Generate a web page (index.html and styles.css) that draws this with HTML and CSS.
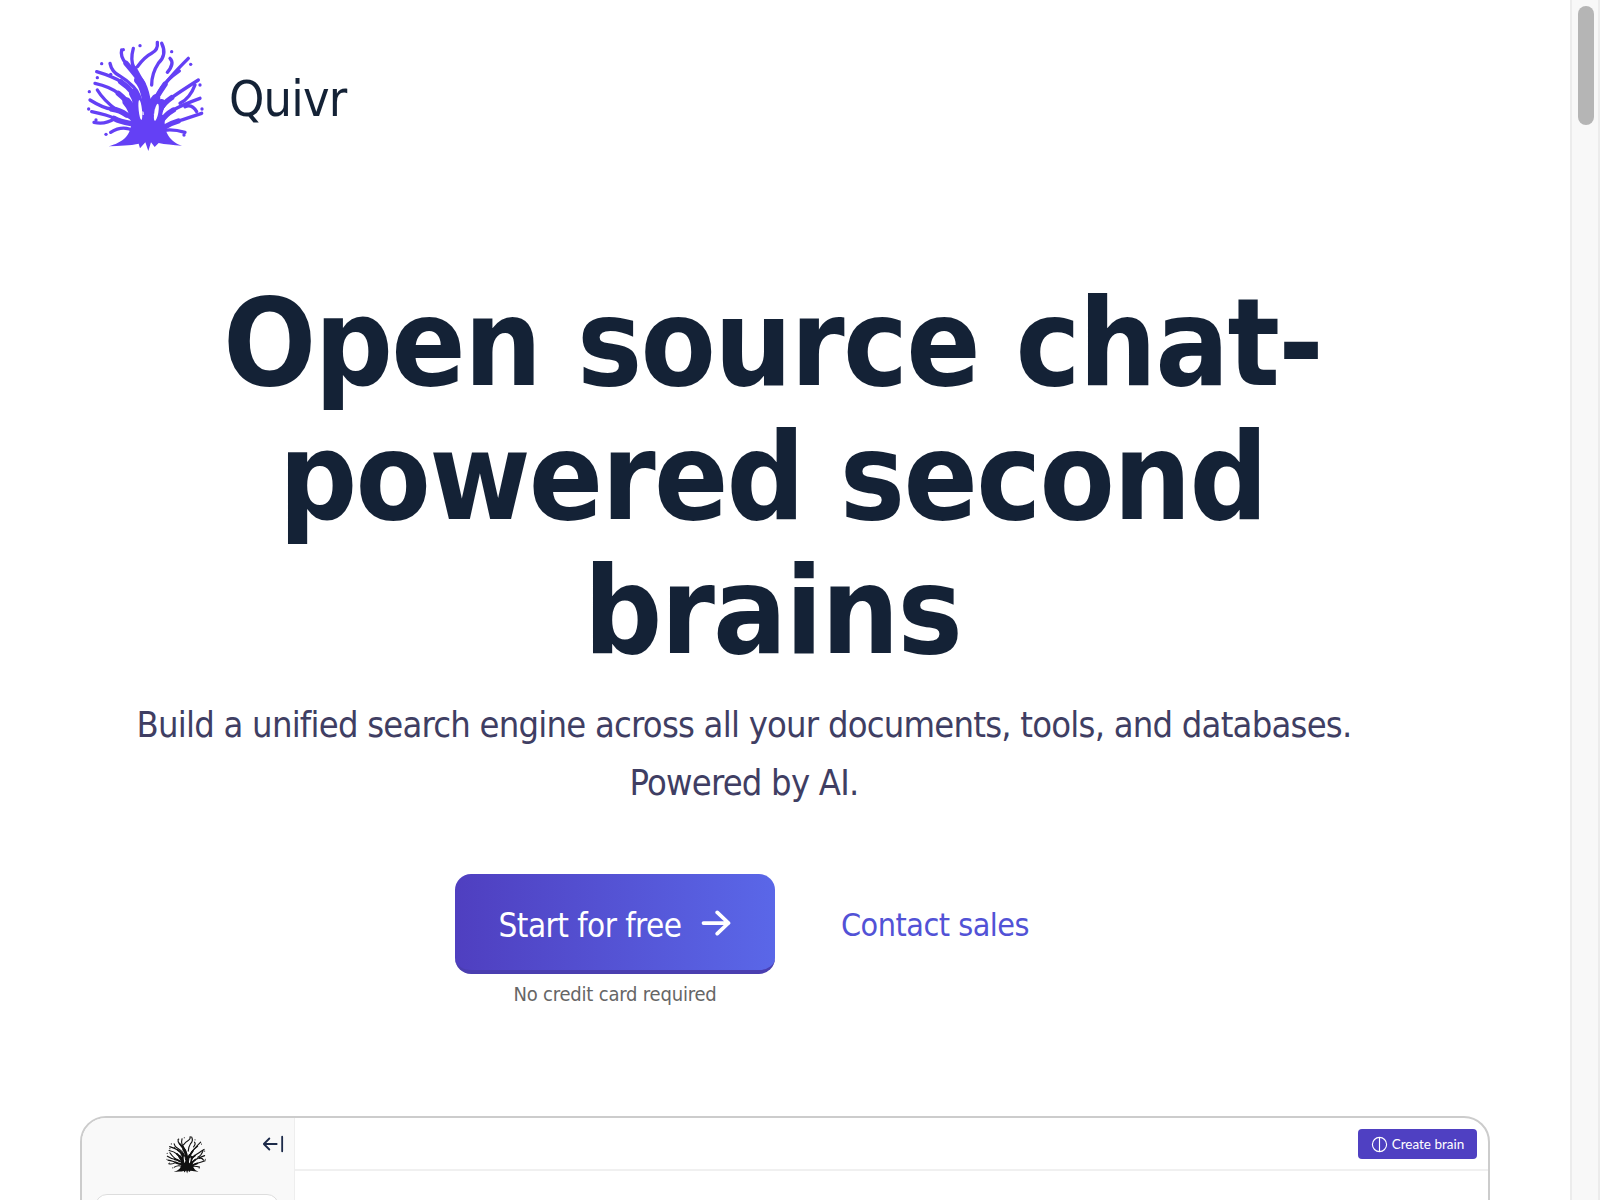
FILE: index.html
```html
<!DOCTYPE html>
<html>

<head>
    <meta charset="utf-8" />
    <title>Quivr</title>
    <link rel="stylesheet" href="styles.css">
</head>

<body>
    <svg class="defs" width="0" height="0">
        <symbol id="tree" viewBox="0 0 390 360">
            <g fill="none" stroke="currentColor" stroke-linecap="round" stroke-linejoin="round">
                <!-- outer twigs -->
                <g stroke-width="10">
                    <path d="M50 110Q100 125 122 140Q145 155 160 175Q175 195 180 250" />
                    <path d="M45 145Q90 155 115 175Q140 195 170 245" />
                    <path d="M30 195Q70 220 95 222Q120 225 165 258" />
                    <path d="M35 230Q85 240 102 250Q120 260 170 270" />
                    <path d="M90 85Q95 110 118 122Q140 135 160 155Q180 175 190 225" />
                    <path d="M125 45Q120 65 138 85Q155 105 175 130Q195 155 200 205" />
                    <path d="M160 40Q150 75 162 100Q175 125 188 145Q200 165 205 210" />
                    <path d="M172 95Q195 65 215 55Q235 45 232 22" />
                    <path d="M215 150Q215 115 235 85Q262 60 245 25" />
                    <path d="M325 70Q270 125 255 148Q240 170 228 190Q215 210 215 235" />
                    <path d="M355 135Q300 170 275 188Q250 205 225 260" />
                    <path d="M360 190Q305 210 280 225Q255 240 235 275" />
                    <path d="M365 235Q320 250 295 258Q270 265 235 290" />
                    <path d="M315 292Q270 278 235 290" />
                    <path d="M298 108Q260 135 245 158Q232 180 222 205" />
                    <path d="M165 290Q130 268 92 292" />
                    <path d="M105 250Q75 270 42 262" />
                    <path d="M110 225Q70 195 52 165" />
                    <path d="M345 150Q330 190 300 205" />
                    <path d="M350 230Q335 205 315 215" />
                    <path d="M270 70Q285 85 262 112" />
                </g>
                <!-- limbs -->
                <g stroke-width="16">
                    <path d="M122 140Q145 155 160 175" />
                    <path d="M115 175Q140 195 150 215" />
                    <path d="M95 222Q120 225 140 240" />
                    <path d="M102 250Q120 260 150 265" />
                    <path d="M138 85Q155 105 175 130" />
                    <path d="M162 100Q175 125 188 145" />
                    <path d="M275 188Q250 205 240 225" />
                    <path d="M280 225Q255 240 245 258" />
                    <path d="M295 258Q270 265 250 278" />
                    <path d="M255 148Q240 170 228 190" />
                </g>
                <g stroke-width="26">
                    <path d="M160 175Q175 195 175 255" />
                    <path d="M140 200Q158 220 165 255" />
                    <path d="M175 135Q200 160 205 250" />
                    <path d="M228 190Q210 210 208 240" />
                    <path d="M245 205Q232 225 232 265" />
                </g>
            </g>
            <path fill="currentColor"
                d="M150 240L255 240C248 295 274 322 306 332C278 330 255 328 236 324L224 336L213 322L205 348L196 322L180 340L176 326C150 332 120 332 85 334C125 324 165 300 150 240Z" />
            <g fill="white">
                <ellipse cx="181" cy="225" rx="5" ry="30" transform="rotate(-6 181 225)" />
                <ellipse cx="229" cy="232" rx="6" ry="26" transform="rotate(10 229 232)" />
            </g>
            <g fill="currentColor">
                <circle cx="65" cy="86" r="5" />
                <circle cx="130" cy="44" r="5" />
                <circle cx="180" cy="32" r="5" />
                <circle cx="275" cy="50" r="5" />
                <circle cx="332" cy="88" r="5" />
                <circle cx="52" cy="128" r="5" />
                <circle cx="92" cy="118" r="5" />
                <circle cx="28" cy="170" r="5" />
                <circle cx="360" cy="150" r="5" />
                <circle cx="26" cy="222" r="5" />
                <circle cx="366" cy="222" r="5" />
                <circle cx="48" cy="255" r="5" />
                <circle cx="78" cy="298" r="5" />
                <circle cx="312" cy="300" r="5" />
            </g>
        </symbol>
    </svg>

    <div class="window">
        <div class="page">
            <header class="top">
                <svg class="logo"><use href="#tree" /></svg>
                <span class="brand">Quivr</span>
            </header>

            <section class="hero">
                <h1>Open source chat-<br>powered second<br>brains</h1>
                <p class="lead">Build a unified search engine across all your documents, tools, and databases.<br>Powered by AI.</p>
                <div class="actions">
                    <div class="cta">
                        <a class="btn-start">
                            Start for free
                            <svg viewBox="0 0 24 24" fill="none" stroke="currentColor" stroke-width="3"
                                stroke-linecap="round" stroke-linejoin="round">
                                <path d="M2 12h20M13 3.5 22 12l-9 8.5" />
                            </svg>
                        </a>
                        <small>No credit card required</small>
                    </div>
                    <a class="btn-sales">Contact sales</a>
                </div>
            </section>

            <div class="preview">
                <aside class="side">
                    <div class="side-top">
                        <svg class="side-logo"><use href="#tree" /></svg>
                        <svg class="collapse" viewBox="0 0 24 24" fill="none" stroke="currentColor" stroke-width="2"
                            stroke-linecap="round" stroke-linejoin="round">
                            <path d="M16 12H2M8 6l-6 6 6 6M22 4v16" />
                        </svg>
                    </div>
                    <div class="side-card"></div>
                </aside>
                <div class="content">
                    <div class="content-bar">
                        <a class="btn-brain">
                            <svg viewBox="0 0 24 24" fill="none" stroke="currentColor" stroke-width="1.6">
                                <circle cx="12" cy="12" r="10" />
                                <path d="M12 2v20" />
                            </svg>
                            Create brain
                        </a>
                    </div>
                </div>
            </div>
        </div>

        <div class="scrollbar">
            <div class="thumb"></div>
        </div>
    </div>
</body>

</html>
```

FILE: styles.css
```css
* {
    margin: 0;
    padding: 0;
    box-sizing: border-box;
}

html,
body {
    height: 100%;
    overflow: hidden;
}

body {
    background: white;
    color: #142236;
    font-family: "DejaVu Sans", sans-serif;
    font-stretch: condensed;
}

.defs {
    position: absolute;
}

.window {
    height: 1200px;
    display: flex;
}

.page {
    flex: 1;
    min-width: 0;
    height: 1200px;
    overflow: hidden;
}

.scrollbar {
    width: 30px;
    background: #f8f8f8;
    border-left: 2px solid #ececec;
    border-right: 2px solid #ececec;
    padding: 6px 4px 0 6px;
}

.thumb {
    height: 119px;
    background: #b5b5b5;
    border-radius: 8px;
}

.top {
    height: 154px;
    padding: 35px 0 0 80px;
    display: flex;
    align-items: center;
    gap: 19px;
}

.logo {
    width: 130px;
    height: 120px;
    color: #6440f5;
}

.brand {
    font-size: 50px;
    letter-spacing: -0.8px;
    margin-top: 8px;
}

.hero {
    text-align: center;
}

h1 {
    margin-top: 122px;
    padding-right: 25px;
    font-size: 122px;
    line-height: 134px;
    font-weight: 700;
    letter-spacing: -1.75px;
}

.lead {
    margin-top: 18px;
    padding-right: 82px;
    color: #3f3e63;
    font-size: 36px;
    line-height: 58px;
    letter-spacing: -0.77px;
}

.actions {
    margin-top: 62px;
    padding-left: 455px;
    display: flex;
    align-items: flex-start;
    gap: 66px;
}

.cta {
    display: flex;
    flex-direction: column;
    align-items: center;
}

.btn-start {
    width: 320px;
    height: 100px;
    display: flex;
    align-items: center;
    justify-content: center;
    gap: 20px;
    padding-top: 7px;
    border-radius: 16px;
    border-bottom: 4px solid #4a3eb0;
    background: linear-gradient(90deg, #4f3fc0, #5a67e8);
    color: white;
    font-size: 33px;
    letter-spacing: -0.55px;
}

.btn-start svg {
    width: 30px;
    height: 30px;
    margin-top: -5px;
}

.cta small {
    margin-top: 8px;
    color: #666;
    font-size: 20px;
    letter-spacing: -0.2px;
}

.btn-sales {
    margin-top: 32px;
    color: #5252d6;
    font-size: 32px;
    letter-spacing: -0.5px;
}

.preview {
    height: 200px;
    margin: 110px 80px 0 80px;
    display: flex;
    border: 2px solid #ccc;
    border-radius: 26px;
    overflow: hidden;
}

.side {
    width: 213px;
    padding: 0 15px 0 13px;
    background: #f9f9f9;
    border-right: 1px solid #eee;
}

.side-top {
    height: 76px;
    display: flex;
    align-items: flex-start;
    justify-content: space-between;
}

.side-logo {
    width: 44px;
    height: 41px;
    margin: 16px 0 0 69px;
    color: #111;
}

.collapse {
    width: 22px;
    height: 22px;
    margin: 15px -5px 0 0;
    color: #1d2b4a;
}

.side-card {
    height: 60px;
    background: white;
    border: 1px solid #ddd;
    border-radius: 12px;
}

.content {
    flex: 1;
}

.content-bar {
    height: 53px;
    padding: 11px 11px 0 0;
    display: flex;
    justify-content: flex-end;
    border-bottom: 2px solid #f0f0f0;
}

.btn-brain {
    width: 119px;
    height: 30px;
    display: flex;
    align-items: center;
    justify-content: center;
    gap: 4px;
    border-radius: 4px;
    background: #4f40c2;
    color: white;
    font-family: Lato, sans-serif;
    font-size: 13.5px;
}

.btn-brain svg {
    width: 17px;
    height: 17px;
}
```
